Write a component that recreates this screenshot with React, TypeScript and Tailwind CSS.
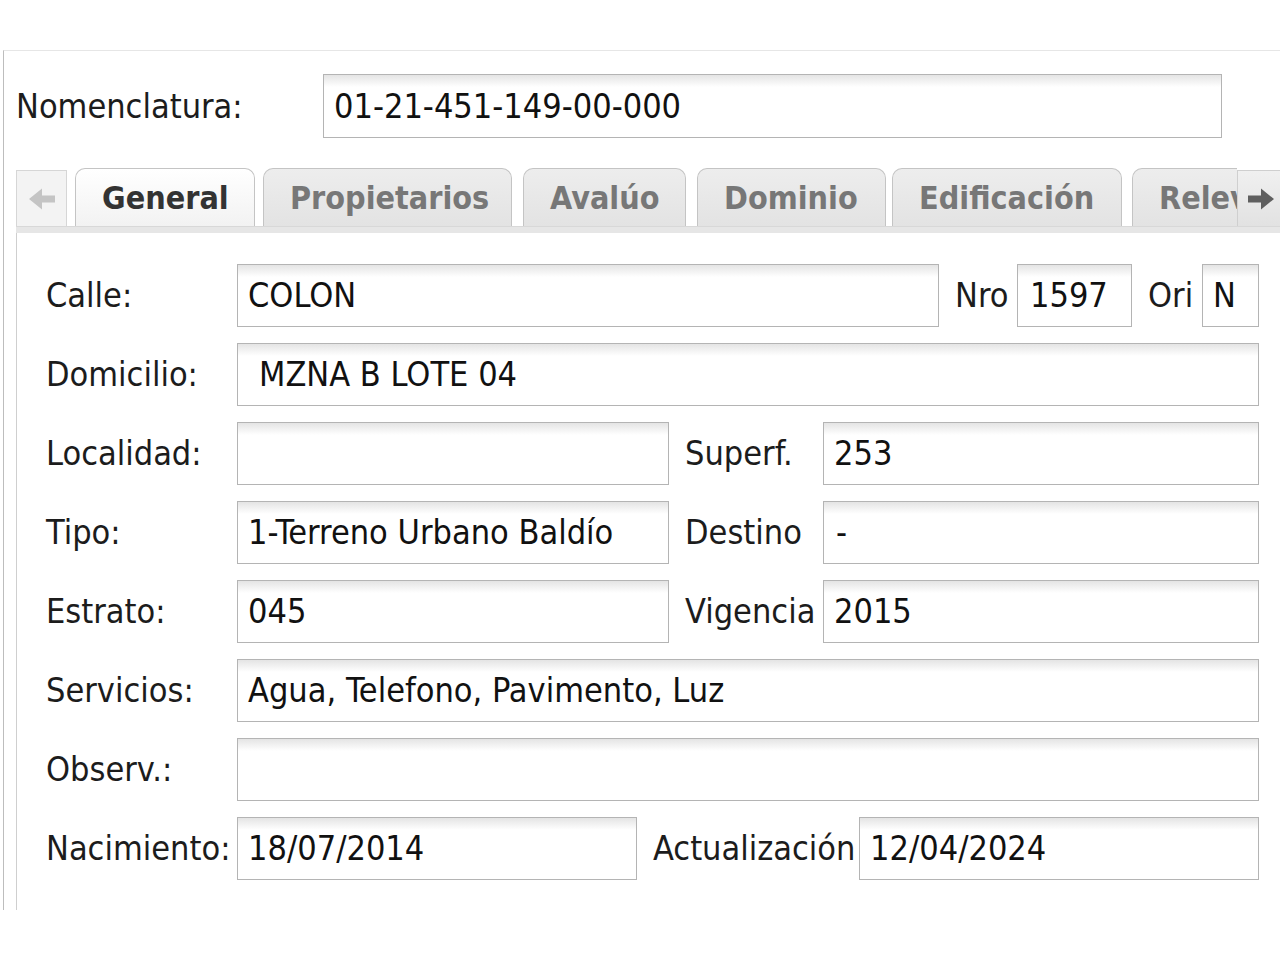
import React from "react";

const font = "font-['DejaVu_Sans_Condensed','DejaVu_Sans',sans-serif] [font-stretch:condensed]";

function Field({ w, text, pl = "pl-[10px]" }: { w: string; text?: string; pl?: string }) {
  return (
    <div
      className={`h-[63px] shrink-0 border border-[#b4b4b4] bg-[linear-gradient(to_bottom,#e4e4e4,#ffffff_12px)] flex items-center ${pl} text-[34px] text-[#111] whitespace-nowrap overflow-hidden ${w}`}
    >
      {text}
    </div>
  );
}

function Label({ w, text, pl = "" }: { w: string; text: string; pl?: string }) {
  return <div className={`shrink-0 text-[34px] text-[#1c1c1c] whitespace-nowrap ${pl} ${w}`}>{text}</div>;
}

function Arrow({ dir, color }: { dir: "left" | "right"; color: string }) {
  return (
    <svg width="28" height="24" viewBox="0 0 28 24" className={dir === "left" ? "-scale-x-100" : ""}>
      <path d="M1 8.5 H14 V1.5 L27 12 L14 22.5 V15.5 H1 Z" fill={color} />
    </svg>
  );
}

function Tab({ label, w, ml, active }: { label: string; w: string; ml: string; active?: boolean }) {
  return (
    <div
      className={`shrink-0 h-[58px] ${w} ${ml} rounded-t-[10px] border border-b-0 border-[#c4c4c4] flex items-center pl-[26px] text-[32px] font-bold whitespace-nowrap overflow-hidden ${
        active
          ? "bg-[linear-gradient(to_bottom,#ffffff,#f2f2f2)] text-[#333333]"
          : "bg-[linear-gradient(to_bottom,#ededed,#e3e3e3)] text-[#777777]"
      }`}
    >
      {label}
    </div>
  );
}

export default function App() {
  return (
    <div className={`w-[1280px] h-[960px] bg-white overflow-hidden pt-[50px] ${font}`}>
      <div className="ml-[3px] w-[1277px] h-[860px] border-l border-t border-l-[#bdbdbd] border-t-[#e6e6e6]">
        {/* Nomenclatura */}
        <div className="flex items-center mt-[23px]">
          <Label w="w-[319px]" pl="pl-[12px]" text="Nomenclatura:" />
          <div className="h-[64px] w-[899px] border border-[#b4b4b4] bg-[linear-gradient(to_bottom,#e4e4e4,#ffffff_12px)] flex items-center pl-[10px] text-[34px] text-[#111]">
            01-21-451-149-00-000
          </div>
        </div>

        {/* Tab panel */}
        <div className="mt-[30px] ml-[12px] w-[1264px]">
          <div className="flex items-end h-[58px]">
            <div className="shrink-0 w-[51px] h-[56px] border border-b-0 border-[#d6d6d6] bg-[#f3f3f3] flex items-center justify-center">
              <Arrow dir="left" color="#c4c4c4" />
            </div>
            <div className="flex-1 flex items-end overflow-hidden h-[58px]">
              <Tab label="General" w="w-[180px]" ml="ml-[8px]" active />
              <Tab label="Propietarios" w="w-[249px]" ml="ml-[8px]" />
              <Tab label="Avalúo" w="w-[163px]" ml="ml-[11px]" />
              <Tab label="Dominio" w="w-[189px]" ml="ml-[11px]" />
              <Tab label="Edificación" w="w-[230px]" ml="ml-[6px]" />
              <Tab label="Relevamiento" w="w-[240px]" ml="ml-[10px]" />
            </div>
            <div className="shrink-0 w-[43px] h-[56px] border-l border-t border-[#cfcfcf] bg-[linear-gradient(to_bottom,#f0f0f0,#e2e2e2)] flex items-center justify-center pl-[4px]">
              <Arrow dir="right" color="#5f5f5f" />
            </div>
          </div>
          <div className="h-[7px] bg-[#e6e6e6] border-t border-[#d8d8d8]" />

          {/* Body */}
          <div className="h-[677px] border-l border-[#cfcfcf] pt-[31px] pl-[29px] flex flex-col gap-[16px]">
            <div className="flex items-center h-[63px]">
              <Label w="w-[191px]" text="Calle:" />
              <Field w="w-[702px]" text="COLON" />
              <Label w="w-[78px]" pl="pl-[16px]" text="Nro" />
              <Field w="w-[115px]" text="1597" pl="pl-[12px]" />
              <Label w="w-[70px]" pl="pl-[16px]" text="Ori" />
              <Field w="w-[57px]" text="N" />
            </div>
            <div className="flex items-center h-[63px]">
              <Label w="w-[191px]" text="Domicilio:" />
              <Field w="w-[1022px]" text="MZNA B LOTE 04" pl="pl-[21px]" />
            </div>
            <div className="flex items-center h-[63px]">
              <Label w="w-[191px]" text="Localidad:" />
              <Field w="w-[432px]" />
              <Label w="w-[154px]" pl="pl-[16px]" text="Superf." />
              <Field w="w-[436px]" text="253" />
            </div>
            <div className="flex items-center h-[63px]">
              <Label w="w-[191px]" text="Tipo:" />
              <Field w="w-[432px]" text="1-Terreno Urbano Baldío" />
              <Label w="w-[154px]" pl="pl-[16px]" text="Destino" />
              <Field w="w-[436px]" text="-" pl="pl-[12px]" />
            </div>
            <div className="flex items-center h-[63px]">
              <Label w="w-[191px]" text="Estrato:" />
              <Field w="w-[432px]" text="045" />
              <Label w="w-[154px]" pl="pl-[16px]" text="Vigencia" />
              <Field w="w-[436px]" text="2015" />
            </div>
            <div className="flex items-center h-[63px]">
              <Label w="w-[191px]" text="Servicios:" />
              <Field w="w-[1022px]" text="Agua, Telefono, Pavimento, Luz" />
            </div>
            <div className="flex items-center h-[63px]">
              <Label w="w-[191px]" text="Observ.:" />
              <Field w="w-[1022px]" />
            </div>
            <div className="flex items-center h-[63px]">
              <Label w="w-[191px]" text="Nacimiento:" />
              <Field w="w-[400px]" text="18/07/2014" />
              <Label w="w-[222px]" pl="pl-[16px]" text="Actualización" />
              <Field w="w-[400px]" text="12/04/2024" />
            </div>
          </div>
        </div>
      </div>
    </div>
  );
}
